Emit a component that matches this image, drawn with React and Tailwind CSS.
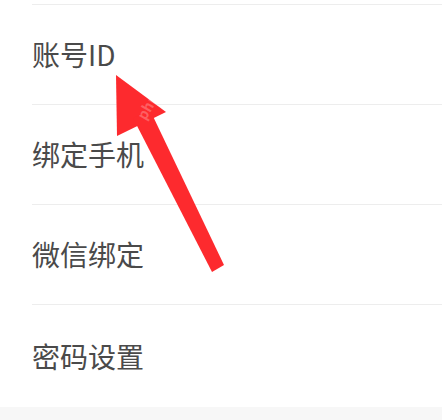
const ROWS = ["账号ID", "绑定手机", "微信绑定", "密码设置"];

export default function App() {
  return (
    <div
      className="relative h-[420px] w-[442px] overflow-hidden bg-[#f7f7f7]"
      style={{ fontFamily: '"Noto Sans CJK SC", "Noto Sans", sans-serif' }}
    >
      <div className="bg-white pt-[4px]">
        {ROWS.map((label, i) => (
          <div key={label} className="pl-[32px]">
            <div
              className={`flex items-center border-t border-[#ededed] text-[28px] leading-none text-[#4a4a4a] ${
                i === ROWS.length - 1 ? "h-[103px]" : "h-[100px]"
              }`}
            >
              <span className="-mt-[1px]">{label}</span>
            </div>
          </div>
        ))}
      </div>

      {/* annotation arrow */}
      <svg className="pointer-events-none absolute left-0 top-0" width="442" height="420" viewBox="0 0 442 420">
        <polygon points="116,75 166,112 117,136" fill="#fd2a2e" />
        <polygon points="133,118 150,110 224,265 212,272" fill="#fd2a2e" />
      </svg>
      <span className="pointer-events-none absolute left-[134px] top-[96px] -rotate-[60deg] text-[14px] font-bold text-white/25">
        php
      </span>
    </div>
  );
}
